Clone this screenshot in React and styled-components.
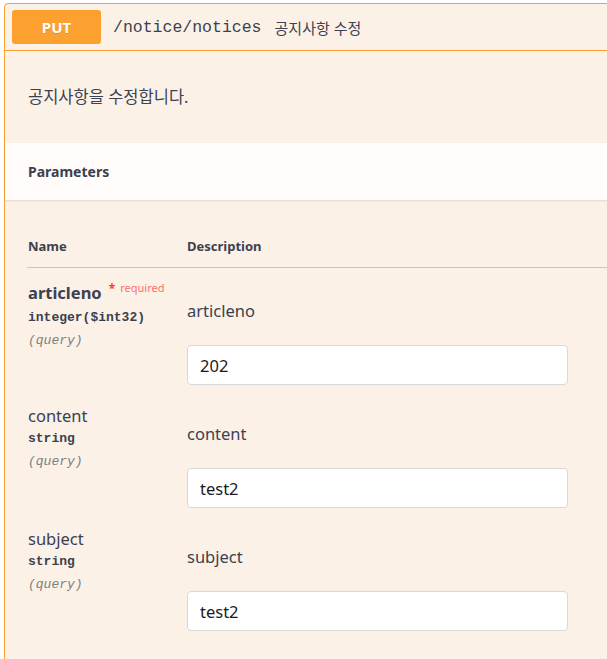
import React from 'react';
import styled, { createGlobalStyle } from 'styled-components';

const GlobalStyle = createGlobalStyle`
  html, body {
    margin: 0;
    background: #ffffff;
    overflow: hidden;
  }
  body {
    font-family: "Noto Sans", "Noto Sans CJK KR", sans-serif;
    color: #3b4151;
  }
`

const Page = styled.div`
  width: 607px;
  height: 659px;
  box-sizing: border-box;
  padding: 3px 0 0 4px;
  overflow: hidden;
`

const Opblock = styled.div`
  width: 720px;
  border: 1px solid #fca130;
  border-radius: 4px;
  background: #fcf1e6;
  padding-bottom: 40px;
`

const Summary = styled.div`
  display: flex;
  align-items: center;
  height: 46px;
  padding: 0 7px;
  border-bottom: 1px solid #fca130;
`

const Method = styled.span`
  width: 89px;
  height: 34px;
  display: flex;
  align-items: center;
  justify-content: center;
  border-radius: 3px;
  background: #fca130;
  color: #fff;
  font-size: 15px;
  font-weight: 700;
  text-shadow: 0 1px 0 rgba(0, 0, 0, .1);
`

const Path = styled.span`
  margin-left: 12px;
  font-family: "Liberation Mono", "DejaVu Sans Mono", monospace;
  font-size: 16.5px;
  color: #3b4151;
`

const SummaryDesc = styled.span`
  margin-left: 13px;
  font-size: 15px;
  color: #3b4151;
`

const DescWrap = styled.div`
  padding: 36px 23px;
  font-size: 16.5px;
  line-height: 20px;
`

const SectionHeader = styled.div`
  height: 57px;
  display: flex;
  align-items: center;
  padding: 0 23px;
  background: rgba(255, 255, 255, .8);
  box-shadow: 0 1px 2px rgba(0, 0, 0, .1);
`

const Title = styled.h4`
  margin: 0;
  font-size: 14px;
  font-weight: 700;
`

const TableWrap = styled.div`
  padding: 27px 0 0 22px;
`

const HeadRow = styled.div`
  display: flex;
  padding: 12px 0 13px 1px;
  border-bottom: 1px solid rgba(59, 65, 81, .25);
`

const HeadCell = styled.div`
  width: ${p => p.$width || 'auto'};
  font-size: 13px;
  font-weight: 700;
  line-height: 15px;
`

const Body = styled.div`
  padding-top: 4px;
`

const Row = styled.div`
  display: flex;
  padding: 11px 0 11px 1px;

  & + & {
    padding-top: 10px;
  }
`

const NameCol = styled.div`
  width: 159px;
  flex-shrink: 0;
`

const ParamName = styled.div`
  font-size: 16.5px;
  line-height: 20px;
  font-weight: ${p => (p.$required ? 700 : 400)};
`

const Star = styled.span`
  position: relative;
  top: -6px;
  margin-left: 7px;
  color: #f93e3e;
  font-size: 12px;
  font-weight: 700;
`

const Required = styled.span`
  position: relative;
  top: -7px;
  margin-left: 5px;
  color: rgba(249, 62, 62, .75);
  font-size: 11px;
  font-weight: 400;
`

const ParamType = styled.div`
  font-family: "Liberation Mono", "DejaVu Sans Mono", monospace;
  font-size: 13px;
  font-weight: 700;
  line-height: 26px;
`

const ParamIn = styled.div`
  font-family: "Liberation Mono", "DejaVu Sans Mono", monospace;
  font-size: 13px;
  font-style: italic;
  line-height: 20px;
  color: #808080;
`

const DescCol = styled.div`
  flex: 0 0 381px;
`

const ParamDesc = styled.div`
  margin-top: 18px;
  font-size: 16.5px;
  line-height: 20px;
`

const Input = styled.input`
  display: block;
  box-sizing: border-box;
  width: 381px;
  height: 40px;
  margin-top: 24px;
  padding: 0 12px;
  border: 1px solid #d9d9d9;
  border-radius: 4px;
  background: #fff;
  font-family: "Noto Sans", "Noto Sans CJK KR", sans-serif;
  font-size: 16.5px;
  color: #1b1b1b;
  outline: none;
`

const params = [
  { name: 'articleno', type: 'integer($int32)', required: true, value: '202' },
  { name: 'content', type: 'string', value: 'test2' },
  { name: 'subject', type: 'string', value: 'test2' },
]

export default function App() {
  return (
    <Page>
      <GlobalStyle />
      <Opblock>
        <Summary>
          <Method>PUT</Method>
          <Path>/notice/notices</Path>
          <SummaryDesc>공지사항 수정</SummaryDesc>
        </Summary>
        <DescWrap>공지사항을 수정합니다.</DescWrap>
        <SectionHeader>
          <Title>Parameters</Title>
        </SectionHeader>
        <TableWrap>
          <HeadRow>
            <HeadCell $width="159px">Name</HeadCell>
            <HeadCell>Description</HeadCell>
          </HeadRow>
          <Body>
            {params.map(p => (
              <Row key={p.name}>
                <NameCol>
                  <ParamName $required={p.required}>
                    {p.name}
                    {p.required && (
                      <>
                        <Star>*</Star>
                        <Required>required</Required>
                      </>
                    )}
                  </ParamName>
                  <ParamType>{p.type}</ParamType>
                  <ParamIn>(query)</ParamIn>
                </NameCol>
                <DescCol>
                  <ParamDesc>{p.name}</ParamDesc>
                  <Input defaultValue={p.value} />
                </DescCol>
              </Row>
            ))}
          </Body>
        </TableWrap>
      </Opblock>
    </Page>
  );
}
